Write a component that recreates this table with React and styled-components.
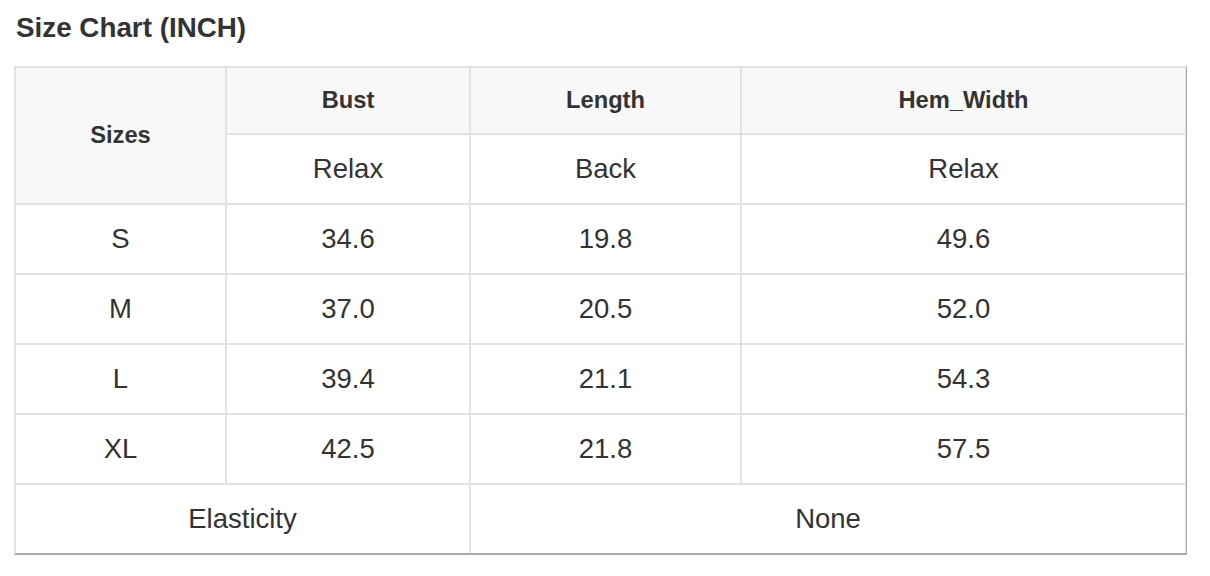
import React from "react";
import styled, { createGlobalStyle } from "styled-components";

const Global = createGlobalStyle`
  html, body { margin: 0; padding: 0; background: #fff; }
  body { font-family: "Liberation Sans", Arial, sans-serif; color: #333; }
`;

const Page = styled.div`
  padding: 12px 0 0 14px;
  width: 1172px;
`;

const Title = styled.h2`
  margin: 0 0 22px 2px;
  font-size: 27.8px;
  line-height: 32px;
  font-weight: 700;
  color: #333;
`;

const Table = styled.table`
  width: 1170px;
  table-layout: fixed;
  border-collapse: separate;
  border-spacing: 0;
  border-top: 2px solid #e2e2e2;
  border-left: 2px solid #e2e2e2;
  border-right: 1px solid #a8a8a8;
  border-bottom: 2px solid #aaaaaa;
`;

const Cell = styled.td`
  box-sizing: border-box;
  height: ${(p) => (p.$bottom ? "68px" : "70px")};
  padding: 0;
  text-align: center;
  vertical-align: middle;
  border-right: ${(p) => (p.$last ? "1px" : "2px")} solid #e2e2e2;
  border-bottom: ${(p) => (p.$bottom ? "0" : "2px solid #e2e2e2")};
  background: ${(p) => (p.$head ? "#f8f8f8" : "#fff")};
  font-size: ${(p) => (p.$head ? "23.7px" : "27.5px")};
  font-weight: ${(p) => (p.$head ? 700 : 400)};
  color: #333;
`;

const HeadRow = styled.tr`
  height: ${(p) => p.$h}px;
`;

const rows = [
  ["S", "34.6", "19.8", "49.6"],
  ["M", "37.0", "20.5", "52.0"],
  ["L", "39.4", "21.1", "54.3"],
  ["XL", "42.5", "21.8", "57.5"],
];

export default function App() {
  return (
    <>
      <Global />
      <Page>
        <Title>Size Chart (INCH)</Title>
        <Table>
          <colgroup>
            <col style={{ width: 211 }} />
            <col style={{ width: 244 }} />
            <col style={{ width: 271 }} />
            <col style={{ width: 444 }} />
          </colgroup>
          <tbody>
            <HeadRow $h={67}>
              <Cell as="th" $head rowSpan={2}>Sizes</Cell>
              <Cell as="th" $head style={{ height: 67 }}>Bust</Cell>
              <Cell as="th" $head style={{ height: 67 }}>Length</Cell>
              <Cell as="th" $head $last style={{ height: 67 }}>Hem_Width</Cell>
            </HeadRow>
            <tr>
              <Cell>Relax</Cell>
              <Cell>Back</Cell>
              <Cell $last>Relax</Cell>
            </tr>
            {rows.map((r) => (
              <tr key={r[0]}>
                <Cell>{r[0]}</Cell>
                <Cell>{r[1]}</Cell>
                <Cell>{r[2]}</Cell>
                <Cell $last>{r[3]}</Cell>
              </tr>
            ))}
            <tr>
              <Cell colSpan={2} $bottom>Elasticity</Cell>
              <Cell colSpan={2} $bottom $last>None</Cell>
            </tr>
          </tbody>
        </Table>
      </Page>
    </>
  );
}
